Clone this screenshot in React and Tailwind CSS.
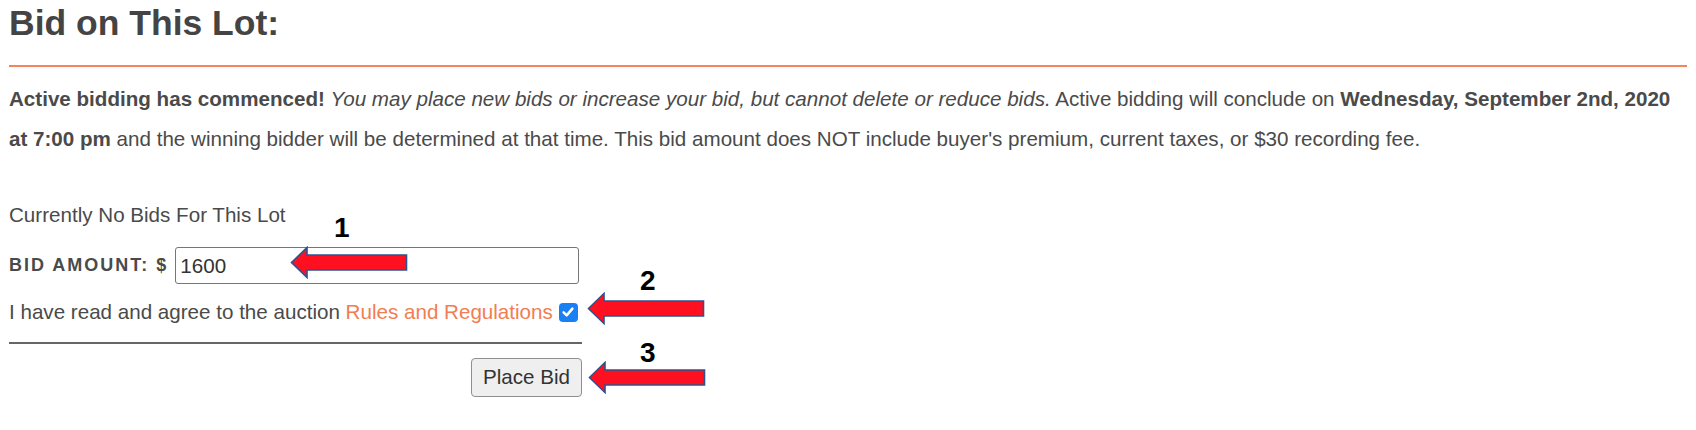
import React from "react";

// red callout arrow used by the annotations (pointing left)
function Arrow({ className }) {
    return (
        <svg className={className} width="118" height="33" viewBox="0 0 118 33">
            <polygon
                points="1.5,16.5 17,1.5 17,9 116.5,9 116.5,24 17,24 17,31.5"
                fill="#ff1020"
                stroke="#2f528f"
                strokeWidth="1.6"
                strokeLinejoin="miter"
            />
        </svg>
    );
}

const App = () => {
    return (
        <div className="relative w-[1696px] h-[430px] bg-white px-[9px] pt-[3px] text-[#4a4a4a] font-['Liberation_Sans',Arial,sans-serif]">
            <h2 className="text-[35.5px] leading-[40px] font-bold text-[#444]">Bid on This Lot:</h2>
            <div className="mt-[22px] h-[2px] bg-[#f4845f]" />

            <p className="mt-[12px] text-[20.6px] leading-[40px]">
                <strong>Active bidding has commenced!</strong>{" "}
                <em>You may place new bids or increase your bid, but cannot delete or reduce bids.</em>{" "}
                Active bidding will conclude on <strong>Wednesday, September 2nd, 2020 at 7:00 pm</strong> and the
                winning bidder will be determined at that time. This bid amount does NOT include buyer's premium,
                current taxes, or $30 recording fee.
            </p>

            <div className="w-[573px] flex flex-col">
                <p className="mt-[44px] text-[20.6px] leading-[24px]">Currently No Bids For This Lot</p>

                <div className="mt-[20px] flex items-center">
                    <label className="text-[18px] font-bold tracking-[2px] uppercase">BID AMOUNT: $</label>
                    <input
                        type="text"
                        defaultValue="1600"
                        className="ml-[7px] w-[404px] h-[37px] px-[4px] text-[20.6px] text-[#333] border border-[#767676] rounded-[3px] outline-none"
                    />
                </div>

                <div className="mt-[16px] flex items-center text-[20.6px] leading-[24px]">
                    <span>I have read and agree to the auction&nbsp;</span>
                    <a href="#" className="text-[#f27d52]">Rules and Regulations</a>
                    <span className="ml-[6px] shrink-0 w-[19px] h-[19px] rounded-[4px] bg-[#1a7ef5] flex items-center justify-center">
                        <svg width="14" height="14" viewBox="0 0 14 14">
                            <path d="M2.6 7.4 L5.7 10.4 L11.4 3.6" fill="none" stroke="white" strokeWidth="2.5" strokeLinecap="round" strokeLinejoin="round" />
                        </svg>
                    </span>
                </div>

                <div className="mt-[18px] h-[2px] bg-[#666]" />

                <div className="mt-[14px] flex justify-end">
                    <button className="w-[111px] h-[39px] text-[20.6px] text-[#333] bg-[#efefef] border border-[#8f8f8f] rounded-[4px]">
                        Place Bid
                    </button>
                </div>
            </div>

            {/* annotations drawn over the form */}
            <span className="absolute left-[334px] top-[214px] text-[28px] leading-none font-bold text-black">1</span>
            <Arrow className="absolute left-[290px] top-[246px]" />

            <span className="absolute left-[640px] top-[267px] text-[28px] leading-none font-bold text-black">2</span>
            <Arrow className="absolute left-[587px] top-[292px]" />

            <span className="absolute left-[640px] top-[339px] text-[28px] leading-none font-bold text-black">3</span>
            <Arrow className="absolute left-[588px] top-[361px]" />
        </div>
    );
};

export default App;
